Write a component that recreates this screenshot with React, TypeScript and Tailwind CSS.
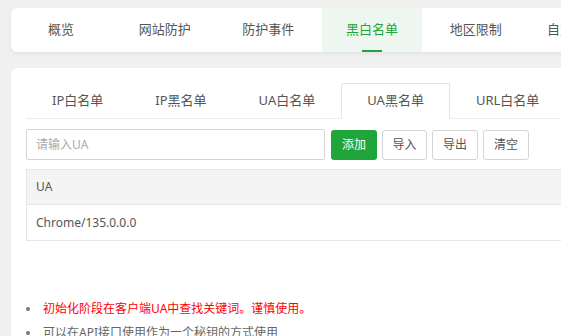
import React from "react";

const font = { fontFamily: '"Noto Sans", "Noto Sans CJK SC", sans-serif' };

const topTabs = ["概览", "网站防护", "防护事件", "黑白名单", "地区限制", "自定义规则"];
const subTabs = ["IP白名单", "IP黑名单", "UA白名单", "UA黑名单", "URL白名单"];

export default function App() {
  const active = 3;
  const activeSub = 3;
  return (
    <div
      className="w-full h-[336px] overflow-hidden bg-[#f0f0f0] pt-[8px] pl-[11px]"
      style={font}
    >
      {/* top nav */}
      <div className="h-[44px] mr-[-40px] bg-white rounded-[6px] shadow-[0_2px_4px_rgba(0,0,0,0.06)] flex gap-[3.7px] overflow-hidden">
        {topTabs.map((t, i) => (
          <div
            key={t}
            className={
              i === active
                ? "relative w-[100px] shrink-0 flex items-center justify-center text-[13px] text-[#20a53a] bg-[#eef7ef]"
                : "relative w-[100px] shrink-0 flex items-center justify-center text-[13px] text-[#555555]"
            }
          >
            {t}
            {i === active && (
              <span className="absolute bottom-0 left-[40px] w-[20px] h-[2px] bg-[#20a53a]" />
            )}
          </div>
        ))}
      </div>

      {/* main card */}
      <div className="mt-[16px] mr-[-40px] h-[400px] bg-white rounded-[6px] pt-[15px] pl-[15px]">
        <div className="flex border-b border-[#eeeeee] h-[36px]">
          {subTabs.map((t, i) => (
            <div
              key={t}
              className={
                i === activeSub
                  ? "h-[36px] px-[25px] flex items-center text-[13px] text-[#555555] bg-white border border-[#e4e4e4] border-b-white rounded-t-[2px]"
                  : "h-[36px] px-[25px] flex items-center text-[13px] text-[#555555] border border-transparent"
              }
            >
              {t}
            </div>
          ))}
        </div>

        <div className="flex items-center mt-[10px] gap-[5px]">
          <input
            className="w-[299px] h-[31px] border border-[#d5d5d5] rounded-[2px] px-[9px] text-[12px] text-[#555] placeholder:text-[#aaaaaa] outline-none"
            placeholder="请输入UA"
          />
          <button className="ml-[1px] h-[30px] w-[46px] rounded-[3px] bg-[#20a53a] text-white text-[12px]">
            添加
          </button>
          <button className="h-[30px] w-[45px] rounded-[3px] border border-[#d5d5d5] bg-white text-[#555] text-[12px]">
            导入
          </button>
          <button className="h-[30px] w-[46px] rounded-[3px] border border-[#d5d5d5] bg-white text-[#555] text-[12px]">
            导出
          </button>
          <button className="h-[30px] w-[46px] rounded-[3px] border border-[#d5d5d5] bg-white text-[#555] text-[12px]">
            清空
          </button>
        </div>

        <div className="mt-[9px] border border-[#e6e6e6] border-r-0 text-[12px] text-[#555555]">
          <div className="h-[35px] bg-[#f4f4f4] border-b border-[#e6e6e6] flex items-center px-[9px]">
            UA
          </div>
          <div className="h-[35px] flex items-center px-[9px]">Chrome/135.0.0.0</div>
        </div>

        <ul className="mt-[56px] text-[12px] leading-[24px]">
          <li className="flex items-center">
            <span className="w-[4px] h-[4px] rounded-full bg-[#777] ml-[0px] mr-[13px]" />
            <span className="text-[#ff0000]">初始化阶段在客户端UA中查找关键词。谨慎使用。</span>
          </li>
          <li className="flex items-center">
            <span className="w-[4px] h-[4px] rounded-full bg-[#777] ml-[0px] mr-[13px]" />
            <span className="text-[#666666]">可以在API接口使用作为一个秘钥的方式使用</span>
          </li>
        </ul>
      </div>
    </div>
  );
}
